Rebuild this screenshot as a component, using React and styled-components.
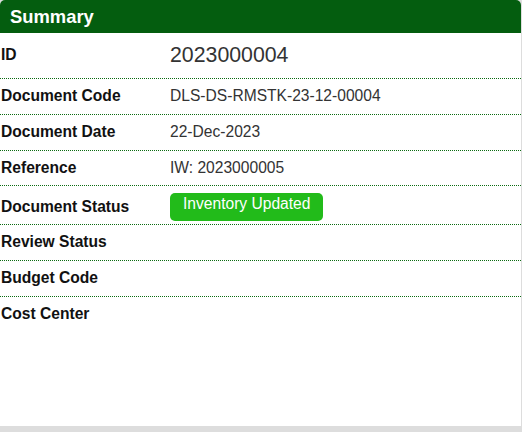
import React from 'react';
import styled, {createGlobalStyle} from 'styled-components';

const GlobalStyle = createGlobalStyle`
    html, body {
        margin: 0;
        padding: 0;
        background: #dddddd;
        font-family: "Liberation Sans", Arial, sans-serif;
    }
`;

const rows = [
    {label: 'ID', value: '2023000004', big: true},
    {label: 'Document Code', value: 'DLS-DS-RMSTK-23-12-00004'},
    {label: 'Document Date', value: '22-Dec-2023'},
    {label: 'Reference', value: 'IW: 2023000005'},
    {label: 'Document Status', badge: 'Inventory Updated'},
    {label: 'Review Status'},
    {label: 'Budget Code'},
    {label: 'Cost Center'},
];

export default function App() {
    return (
        <>
            <GlobalStyle />
            <Panel>
                <Header>Summary</Header>
                <List>
                    {rows.map((row) => (
                        <Row key={row.label} $big={row.big} $hasBadge={!!row.badge}>
                            <Label>{row.label}</Label>
                            {row.badge ? (
                                <Badge>{row.badge}</Badge>
                            ) : (
                                <Value $big={row.big}>{row.value}</Value>
                            )}
                        </Row>
                    ))}
                </List>
            </Panel>
        </>
    );
}

const Panel = styled.div`
    width: 521px;
    height: 426px;
    background: #ffffff;
    border-radius: 5px 5px 0 0;
    overflow: hidden;
`;

const Header = styled.div`
    height: 33px;
    background: #045d0f;
    color: #ffffff;
    font-weight: bold;
    font-size: 18.4px;
    line-height: 33px;
    padding-left: 10px;
    box-sizing: border-box;
`;

const List = styled.div`
    display: flex;
    flex-direction: column;
`;

const Row = styled.div`
    display: grid;
    grid-template-columns: 170px 1fr;
    align-items: center;
    padding: ${(p) => (p.$hasBadge ? '7px 0 3px' : '8px 0 8.2px')};
    min-height: ${(p) => (p.$big ? '29px' : p.$hasBadge ? '28px' : '18.5px')};
    border-bottom: 1px dotted #0b6b12;
    &:last-child {
        border-bottom: none;
    }
`;

const Label = styled.div`
    font-weight: bold;
    font-size: 15.6px;
    line-height: 18.5px;
    color: #111111;
    padding-left: 1px;
`;

const Value = styled.div`
    font-size: ${(p) => (p.$big ? '21.3px' : '15.6px')};
    line-height: ${(p) => (p.$big ? '29px' : '18.5px')};
    color: #333333;
`;

const Badge = styled.span`
    justify-self: start;
    display: inline-block;
    height: 28px;
    line-height: 22px;
    padding: 0 13px;
    box-sizing: border-box;
    background: #22bb1a;
    color: #ffffff;
    font-size: 15.6px;
    border-radius: 5px;
`;
